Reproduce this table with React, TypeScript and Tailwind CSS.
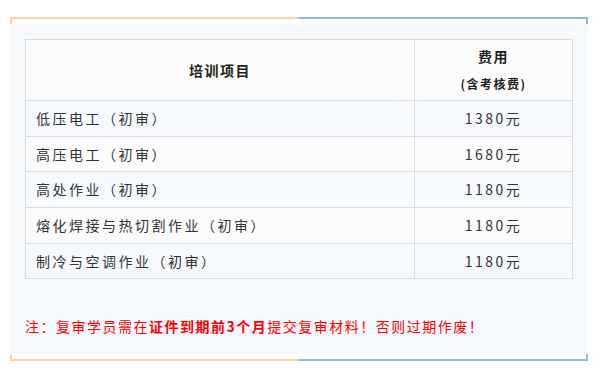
import React from "react";

const rows = [
  { name: "低压电工（初审）", price: "1380元", h: "h-[36px]", bg: "bg-[#f6f9fd]" },
  { name: "高压电工（初审）", price: "1680元", h: "h-[35px]", bg: "bg-[#fcfcfc]" },
  { name: "高处作业（初审）", price: "1180元", h: "h-[36px]", bg: "bg-[#f6f9fd]" },
  { name: "熔化焊接与热切割作业（初审）", price: "1180元", h: "h-[36px]", bg: "bg-[#fcfcfc]" },
  { name: "制冷与空调作业（初审）", price: "1180元", h: "h-[35px]", bg: "bg-[#f6f9fd]" },
];

export default function App() {
  return (
    <div
      className="w-[598px] h-[375px] bg-white pt-[17px] pl-[10px]"
      style={{ fontFamily: '"Noto Sans CJK SC", "Noto Sans", sans-serif' }}
    >
      <div className="w-[578px]">
        <div className="flex h-[7px]">
          <div className="w-1/2 border-t-2 border-l-2 border-[#fdd4a6]" />
          <div className="w-1/2 border-t-2 border-r-2 border-[#86c0dd]" />
        </div>
        <div className="bg-[#f5f9fc] pl-[15px] pr-[16px] pt-[15px] pb-[16px]">
          <table className="w-[547px] border-collapse table-fixed">
            <colgroup>
              <col className="w-[389px]" />
              <col className="w-[158px]" />
            </colgroup>
            <thead>
              <tr className="h-[61px] bg-[#fcfcfc]">
                <th className="border border-[#dcdcdc] text-center text-[14px] font-bold text-[#222] tracking-[1.5px] p-0">
                  培训项目
                </th>
                <th className="border border-[#dcdcdc] text-center font-bold text-[#222] p-0">
                  <div className="text-[14px] leading-[27px] tracking-[1.5px]">费用</div>
                  <div className="text-[12px] leading-[27px] tracking-[1.5px]">(含考核费)</div>
                </th>
              </tr>
            </thead>
            <tbody>
              {rows.map((r) => (
                <tr key={r.name} className={`${r.h} ${r.bg}`}>
                  <td className="border border-[#dcdcdc] pl-[10px] text-[14px] tracking-[2.5px] text-[#333] whitespace-nowrap">
                    {r.name}
                  </td>
                  <td className="border border-[#dcdcdc] text-center text-[14px] tracking-[2.5px] text-[#333]">
                    {r.price}
                  </td>
                </tr>
              ))}
            </tbody>
          </table>
          <p className="mt-[35px] text-[14px] leading-[24px] tracking-[1.5px] text-[#ff0000] whitespace-nowrap">
            注：复审学员需在<span className="font-bold">证件到期前3个月</span>提交复审材料！否则过期作废！
          </p>
        </div>
        <div className="flex h-[7px]">
          <div className="w-1/2 border-b-2 border-l-2 border-[#fdd4a6]" />
          <div className="w-1/2 border-b-2 border-r-2 border-[#86c0dd]" />
        </div>
      </div>
    </div>
  );
}
